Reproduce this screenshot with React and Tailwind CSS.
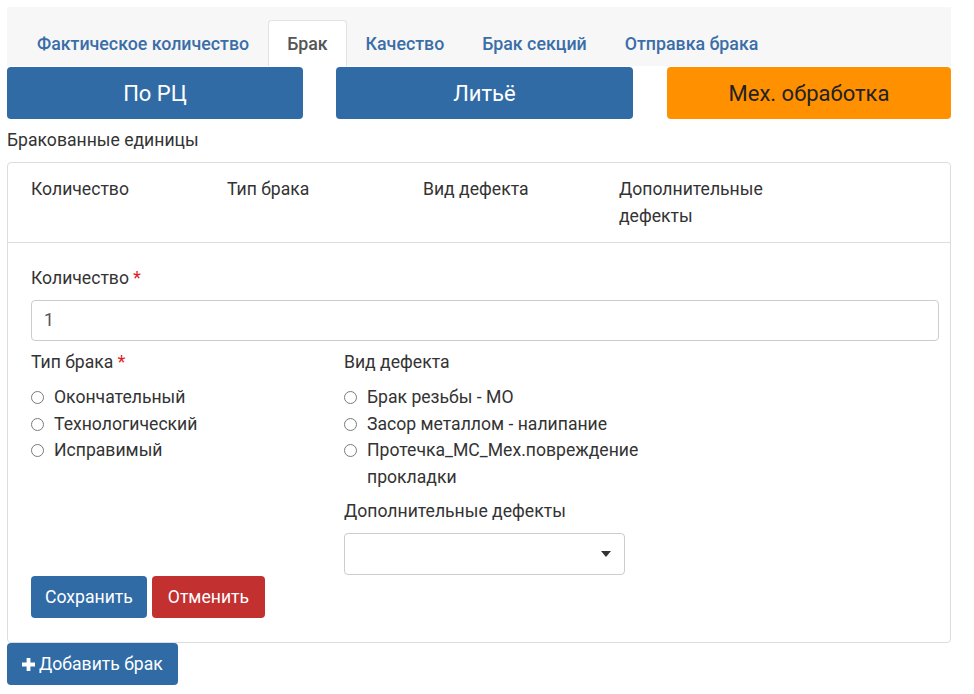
import React from "react";

const tabs = ["Фактическое количество", "Брак", "Качество", "Брак секций", "Отправка брака"];

const Radio = ({ label }) => (
  <label className="flex items-start gap-[10px] leading-[26.5px]">
    <span className="mt-[7px] h-[13px] w-[13px] shrink-0 rounded-full border border-[#7a7a7a] bg-white" />
    <span>{label}</span>
  </label>
);

export default function App() {
  return (
    <div
      className="min-h-screen bg-white px-[7px] pt-[7px] text-[17.6px] text-[#333]"
      style={{ fontFamily: "Roboto, 'Liberation Sans', sans-serif" }}
    >
      <div className="w-[944px]">
        <div className="flex h-[59px] items-end bg-[#f7f7f7] pl-[11px] text-[17.8px]">
          {tabs.map((t) =>
            t === "Брак" ? (
              <div
                key={t}
                className="flex h-[46px] items-center rounded-t-[4px] border border-b-0 border-[#e2e2e2] bg-white px-[18px] pt-[2px] font-medium text-[#555]"
              >
                {t}
              </div>
            ) : (
              <div key={t} className="flex h-[46px] items-center px-[19px] pt-[2px] font-medium text-[#3a6ea8]">
                {t}
              </div>
            )
          )}
        </div>

        <div className="mt-px flex h-[52px] text-[22px]">
          <button className="w-[296px] rounded-[4px] bg-[#306ba5] text-white">По РЦ</button>
          <button className="ml-[33px] w-[297px] rounded-[4px] bg-[#306ba5] text-white">Литьё</button>
          <button className="ml-[34px] w-[284px] rounded-[4px] bg-[#ff9000] text-[#222]">Мех. обработка</button>
        </div>

        <div className="mt-[9px] leading-[24px]">Бракованные единицы</div>

        <div className="mt-[10px] rounded-[4px] border border-[#ddd]">
          <div className="flex h-[80px] border-b border-[#ddd] px-[23px] pt-[13px] leading-[27px]">
            <div className="w-[196px]">Количество</div>
            <div className="w-[196px]">Тип брака</div>
            <div className="w-[196px]">Вид дефекта</div>
            <div className="w-[170px]">Дополнительные дефекты</div>
          </div>

          <div className="pb-[24px] pl-[23px] pr-[11px] pt-[23px]">
            <div className="leading-[24px]">
              Количество <span className="text-[#e02020]">*</span>
            </div>
            <div className="mt-[10px] flex h-[41px] items-center rounded-[4px] border border-[#ccc] px-[12px] text-[#555]">
              1
            </div>

            <div className="mt-[9px] flex">
              <div className="w-[313px]">
                <div className="leading-[24px]">
                  Тип брака <span className="text-[#e02020]">*</span>
                </div>
                <div className="mt-[10px]">
                  <Radio label="Окончательный" />
                  <Radio label="Технологический" />
                  <Radio label="Исправимый" />
                </div>
              </div>
              <div className="w-[310px]">
                <div className="leading-[24px]">Вид дефекта</div>
                <div className="mt-[10px]">
                  <Radio label="Брак резьбы - МО" />
                  <Radio label="Засор металлом - налипание" />
                  <Radio label="Протечка_МС_Мех.повреждение прокладки" />
                </div>
                <div className="mt-[9px] leading-[24px]">Дополнительные дефекты</div>
                <div className="mt-[10px] flex h-[42px] w-[281px] items-center justify-end rounded-[4px] border border-[#ccc] pr-[13px]">
                  <svg width="10" height="6" viewBox="0 0 10 6">
                    <path d="M0 0h10L5 6z" fill="#333" />
                  </svg>
                </div>
              </div>
            </div>

            <div className="mt-px flex gap-[5px]">
              <button className="h-[42px] rounded-[4px] bg-[#306ba5] px-[14px] text-white">Сохранить</button>
              <button className="h-[42px] rounded-[4px] bg-[#c33030] px-[16px] text-white">Отменить</button>
            </div>
          </div>
        </div>

        <button className="flex h-[42px] items-center gap-[4px] rounded-[4px] bg-[#306ba5] px-[15px] text-white">
          <svg width="13" height="13" viewBox="0 0 13 13">
            <path d="M4.6 0h3.8v4.6H13v3.8H8.4V13H4.6V8.4H0V4.6h4.6z" fill="#fff" />
          </svg>
          Добавить брак
        </button>
      </div>
    </div>
  );
}
